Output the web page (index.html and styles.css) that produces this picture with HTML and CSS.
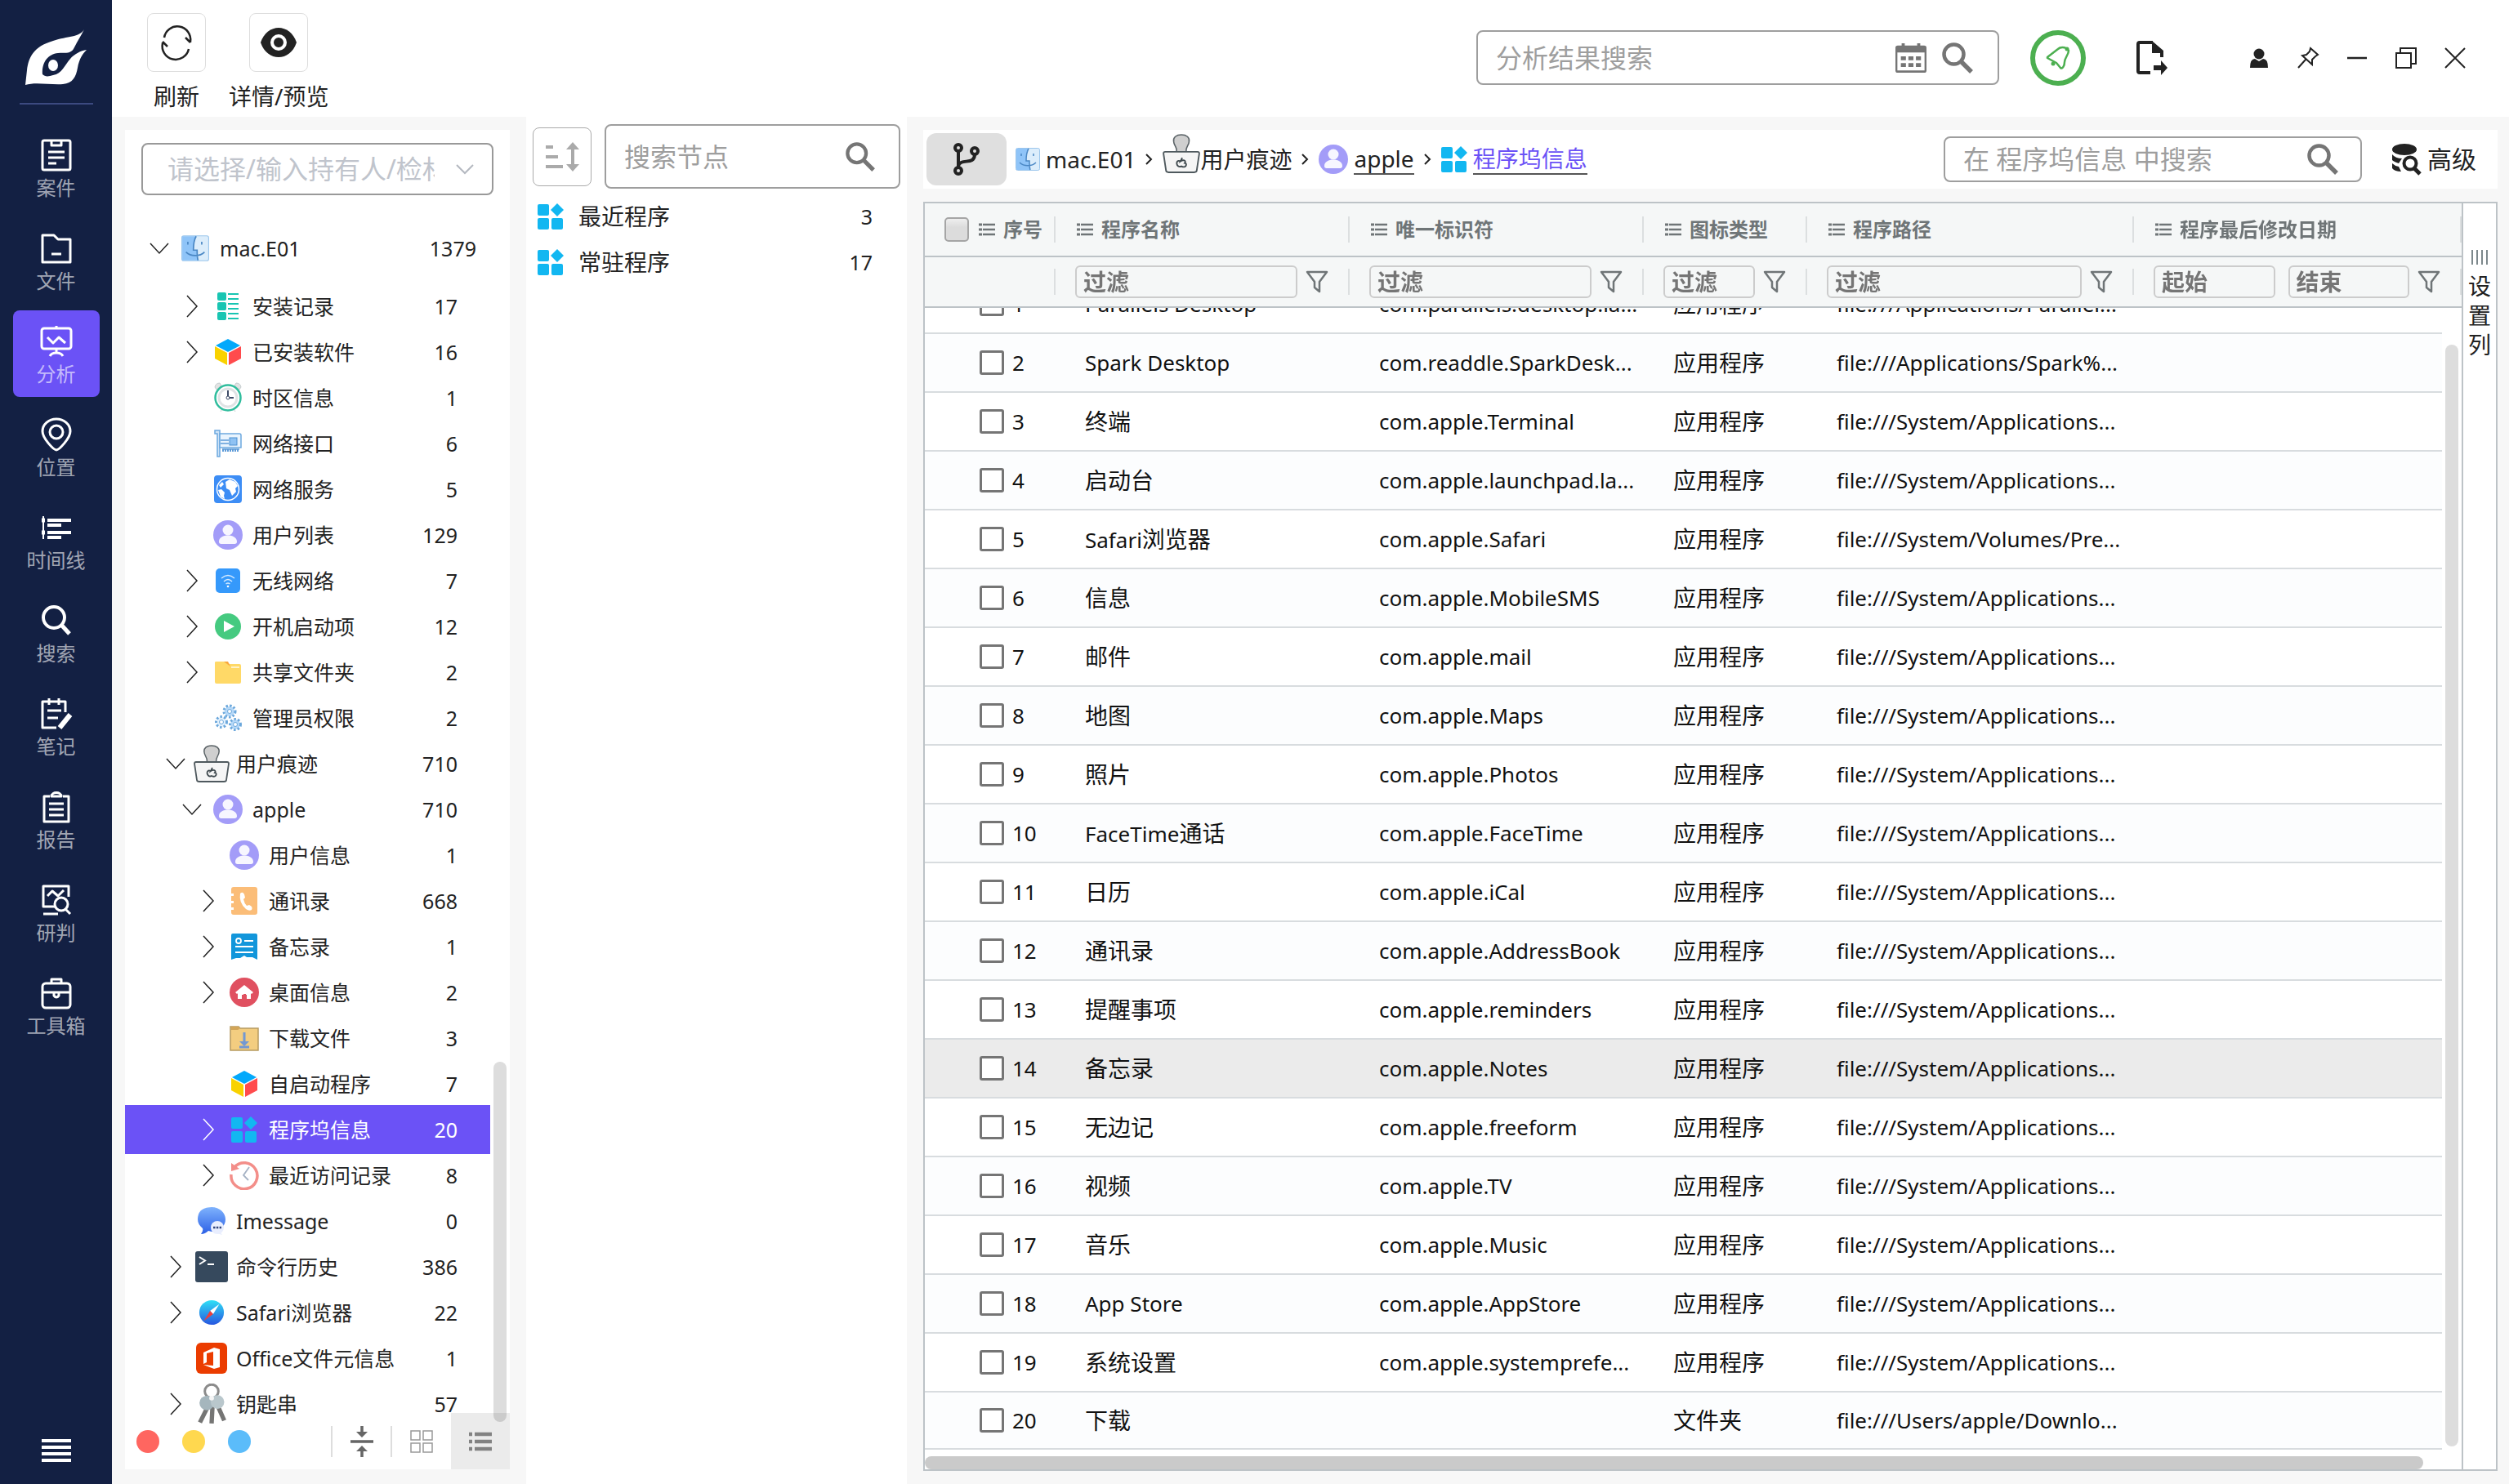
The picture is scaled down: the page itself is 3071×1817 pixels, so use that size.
FILE: index.html
```html
<!DOCTYPE html>
<html lang="zh-CN">
<head>
<meta charset="utf-8">
<title>程序坞信息</title>
<link rel="stylesheet" href="styles.css">
</head>
<body>
<svg class="sprite" aria-hidden="true">
  <symbol id="search" viewBox="0 0 38 38"><circle cx="14.500" cy="14.500" r="12" fill="none" stroke="currentColor" stroke-width="4.500"/><path d="M24 24 36 36" stroke="currentColor" stroke-width="5.500"/></symbol>
  <symbol id="right" viewBox="0 0 24 28"><path d="M6 1 18 14 6 27" fill="none" stroke="currentColor" stroke-width="1.500"/></symbol>
  <symbol id="down" viewBox="0 0 24 28"><path d="M1 8 12 20 23 8" fill="none" stroke="currentColor" stroke-width="1.500"/></symbol>
  <symbol id="crumb" viewBox="0 0 10 16"><path d="M2 2 8 8 2 14" fill="none" stroke="currentColor" stroke-width="2"/></symbol>
  <symbol id="list" viewBox="0 0 20 16"><path d="M5 2H20M5 8H20M5 14H20" stroke="currentColor" stroke-width="2.500"/><path d="M0 2H4M0 8H4M0 14H4" stroke="currentColor" stroke-width="3"/></symbol>
  <symbol id="funnel" viewBox="0 0 28 28"><path d="M2 2H26L17 14V26L11 21V14Z" fill="none" stroke="currentColor" stroke-width="2.500" stroke-linejoin="round"/></symbol>
  <symbol id="apps" viewBox="0 0 32 32"><g fill="#12b7f1"><rect x="0" y="1" width="14" height="14" rx="2"/><rect x="0" y="18" width="14" height="14" rx="2"/><rect x="17" y="18" width="14" height="14" rx="2"/><path d="M24 0 32 8 24 16 16 8Z"/></g></symbol>
  <symbol id="finder" viewBox="0 0 30 28"><rect x=".5" y=".5" width="29" height="27" rx="2" fill="#dcedfb" stroke="#9cc6ec"/><path d="M1 1H16C13 6 13 11 13 16H17C17 20 17 24 18 27H1Z" fill="#8fc4f8"/><path d="M16 1C13 6 13 11 13 16H17C17 20 17 24 18 27M7 7V10M22 7V10M5 18C10 23 20 23 25 18" fill="none" stroke="#4a87c4" stroke-width="1.500"/></symbol>
  <symbol id="user" viewBox="0 0 36 36"><circle cx="18" cy="18" r="18" fill="#a39cf8"/><circle cx="18" cy="12" r="6.500" fill="#f7f6ff"/><path d="M7 26C7 16 29 16 29 26 29 30 26 29 18 29S7 30 7 26Z" fill="#f7f6ff"/></symbol>
  <symbol id="laptop" viewBox="0 0 44 46"><path d="M16 21C18 17 13 13 13 9 12 4 16 1 22 1S32 4 31 9C31 13 26 17 28 21Z" fill="#cfcfcf" stroke="#5a6266" stroke-width="1.500"/><path d="M3 21H41Q43 21 43 23L40 43Q40 45 37 45H7Q4 45 4 43L1 23Q1 21 3 21Z" fill="#f5f5f5" stroke="#4f595e" stroke-width="1.800"/><path d="M21 32C14 29 16 41 22 38 28 41 29 34 26 34 28 31 24 30 21 32L23 28" fill="none" stroke="#3f494e" stroke-width="1.800"/></symbol>
  <symbol id="i-list" viewBox="0 0 34 34"><g fill="#18c5b2"><rect x="4" y="0" width="11" height="10" rx="2"/><rect x="4" y="12" width="11" height="10" rx="2"/><rect x="4" y="24" width="11" height="10" rx="2"/></g><path d="M17 2H30M17 8H30M17 14H30M17 20H30M17 26H30M17 32H30" stroke="#18c5b2" stroke-width="2"/></symbol>
  <symbol id="i-cube" viewBox="0 0 34 34"><path d="M17 1 32 9 17 17 2 9Z" fill="#03a9fb"/><path d="M1 10 16 18V33L1 25Z" fill="#f9d200"/><path d="M33 10 18 18V33L33 25Z" fill="#ff4b4d"/></symbol>
  <symbol id="i-clock" viewBox="0 0 34 38"><path d="M1 6Q2 1 7 1L9 4 3 9ZM33 6Q32 1 27 1L25 4 31 9ZM8 36 11 31M26 36 23 31" fill="#e3e3e3" stroke="#c5cdcf"/><circle cx="17" cy="19" r="15.500" fill="#fff" stroke="#30bd9d" stroke-width="2.500"/><circle cx="17" cy="19" r="11" fill="none" stroke="#e0e3e5" stroke-width="3"/><path d="M17 10V19H24" fill="none" stroke="#3c4a66" stroke-width="2"/><circle cx="17" cy="19" r="2" fill="#fff" stroke="#3c4a66"/></symbol>
  <symbol id="i-nic" viewBox="0 0 34 34"><path d="M1 1H7V33H4V5H1Z" fill="#cfe4f8" stroke="#6ea9df" stroke-width="1.500"/><path d="M7 5H31Q33 5 33 7V22H7Z" fill="#e9f4fe" stroke="#6ea9df" stroke-width="1.500"/><rect x="19" y="10" width="9" height="9" fill="#8fc2f3" stroke="#4d8fd0"/><path d="M8 13H18M8 17H18M10 24H31" stroke="#5d9bd8" stroke-width="1.500"/><path d="M10 25.500H31" stroke="#5d9bd8" stroke-width="3" stroke-dasharray="2 1"/></symbol>
  <symbol id="i-globe" viewBox="0 0 34 34"><rect width="34" height="34" rx="4" fill="#3d8df5"/><circle cx="17" cy="17" r="13.500" fill="#3d8df5" stroke="#fff" stroke-width="1.500"/><path d="M14 8 19 5 26 8 29 13 26 16 27 20 22 25 19 18 15 16ZM5 18 9 17 13 21 12 25 13 29 8 26ZM6 12 10 8 12 11 8 15Z" fill="#fff"/></symbol>
  <symbol id="i-wifi" viewBox="0 0 34 34"><rect x="2" y="2" width="30" height="30" rx="5" fill="#3599fb"/><path d="M9 14Q17 7 25 14M12 18Q17 13 22 18M14.500 21Q17 19 19.500 21" fill="none" stroke="#d4eaff" stroke-width="1.500"/><circle cx="17" cy="24" r="1.300" fill="#fff"/></symbol>
  <symbol id="i-play" viewBox="0 0 34 34"><circle cx="17" cy="17" r="16" fill="#45ca80"/><path d="M12 10 25 17 12 24Z" fill="#fff"/></symbol>
  <symbol id="i-folder" viewBox="0 0 34 34"><path d="M1 5Q1 4 3 4H15L19 7H31Q33 7 33 9V29Q33 31 31 31H3Q1 31 1 29Z" fill="#ffd967"/><path d="M12 4H17L20 10Z" fill="#f9a73e"/><path d="M21 11H31" stroke="#fff2c8" stroke-width="2"/></symbol>
  <symbol id="i-gears" viewBox="0 0 34 34"><g fill="#b5d8f8"><circle cx="19" cy="9" r="6"/><circle cx="9" cy="22" r="6" fill="#e3f1fd"/><circle cx="26" cy="25" r="6"/></g><g fill="none" stroke="#6ca8dc" stroke-width="3" stroke-dasharray="2.500 2.200"><circle cx="19" cy="9" r="7"/><circle cx="9" cy="22" r="6.500"/><circle cx="26" cy="25" r="6.500"/></g><g fill="#fff" stroke="#6ca8dc"><circle cx="19" cy="9" r="2.500"/><circle cx="9" cy="22" r="2.500"/><circle cx="26" cy="25" r="2.500"/></g></symbol>
  <symbol id="i-phone" viewBox="0 0 34 34"><path d="M4 0H30Q33 0 33 3V31Q33 34 30 34H4Q1 34 1 31V28H4V25H1V20H4V17H1V11H4V8H1V3Q1 0 4 0Z" fill="#fbbd78"/><path d="M12 8Q15 5 17 9L18 13 16 15Q17 20 20 23L23 22Q28 24 26 28 23 30 19 27 10 19 12 8Z" fill="#fff"/></symbol>
  <symbol id="i-memo" viewBox="0 0 34 34"><path d="M1 3Q1 1 3 1H31Q33 1 33 3V33L27 30H20L17 28 12 31H7L1 33Z" fill="#1296db"/><circle cx="10" cy="10" r="3" fill="none" stroke="#fff" stroke-width="1.800"/><path d="M17 10H28M6 17H28M6 24H28" stroke="#fff" stroke-width="2"/></symbol>
  <symbol id="i-home" viewBox="0 0 36 36"><circle cx="18" cy="18" r="18" fill="#e05060"/><path d="M7 18 18 9 29 18 27 20 18 13 9 20ZM10 19 18 13 26 19V26H21V21H15V26H10Z" fill="#fff"/><path d="M17 26V20H20V26Z" fill="#e05060"/></symbol>
  <symbol id="i-dl" viewBox="0 0 36 32"><path d="M1 2H11L13 4H35V31H1Z" fill="#f3cd80" stroke="#b79a60" stroke-width="1.500"/><path d="M2 2H11L12 5 10 6H2Z" fill="#d3a558"/><path d="M18 9V22M12 27H24" stroke="#7398d2" stroke-width="3"/><path d="M12 20 18 26 24 20Z" fill="#7398d2"/></symbol>
  <symbol id="i-recent" viewBox="0 0 36 36"><path d="M6 8A16 16 0 1 1 2 17" fill="none" stroke="#f38e89" stroke-width="3.500"/><path d="M2 3V13L12 10Z" fill="#f38e89"/><path d="M24 8 17 18 23 24" fill="none" stroke="#a5b2c4" stroke-width="1.800"/></symbol>
  <symbol id="i-msg" viewBox="0 0 36 36"><linearGradient id="gm" x2="0" y2="1"><stop stop-color="#7fb3fd"/><stop offset="1" stop-color="#2c60e6"/></linearGradient><path d="M18 1C28 1 35 8 35 16S28 31 18 31L14 30Q10 34 5 34 8 30 7 27 1 22 1 16 1 1 18 1Z" fill="url(#gm)"/><circle cx="25" cy="26" r="8" fill="#e9eefe"/><path d="M29 32 31 35 24 33Z" fill="#e9eefe"/><path d="M20 26H30" stroke="#32457c" stroke-width="2.500" stroke-dasharray="2.500 1.300"/></symbol>
  <symbol id="i-term" viewBox="0 0 40 38"><rect width="40" height="38" rx="3" fill="#36495d"/><path d="M5 7 12 11.500 5 16M15 16H23" fill="none" stroke="#fff" stroke-width="2"/></symbol>
  <symbol id="i-safari" viewBox="0 0 34 34"><linearGradient id="gs" x2="0" y2="1"><stop stop-color="#2fe0f6"/><stop offset="1" stop-color="#2756e0"/></linearGradient><circle cx="17" cy="17" r="16" fill="url(#gs)"/><path d="M27 6 19 19 15 15Z" fill="#fff"/><path d="M7 28 19 19 15 15Z" fill="#ee3f3a"/></symbol>
  <symbol id="i-office" viewBox="0 0 38 38"><rect width="38" height="38" rx="6" fill="#eb3c00"/><path d="M9 12 22 6 29 8V30L22 32 9 27 21 28V11L13 13V24L9 26Z" fill="#fff"/></symbol>
  <symbol id="i-keys" viewBox="0 0 34 42"><circle cx="17" cy="8" r="7" fill="none" stroke="#8b8b8b" stroke-width="2.500"/><path d="M14 22 5 40M18 22 17 41M22 20 30 38" stroke="#757574" stroke-width="4.500"/><circle cx="12" cy="20" r="7.500" fill="#a5b6bd"/><circle cx="23" cy="19" r="7" fill="#b9c7cc"/><circle cx="17" cy="15" r="2.500" fill="#f5f5f5"/></symbol>
</svg>

<div class="app">
  <nav class="rail">
    <svg class="logo" viewBox="0 0 75 68"><path d="M72 0C66 10 52 8 34 14 10 21 4 34 2 50L0 68C12 64 30 68 46 67 58 66 62 58 64 47 66 36 70 30 75 25 68 26 60 30 55 36 48 44 45 54 34 56 28 58 24 58 21 55 20 40 28 30 40 29 48 28 56 31 60 22 64 14 68 8 72 0Z" fill="#fff"/><ellipse cx="34" cy="44" rx="6" ry="7" fill="#fff"/></svg>
    <div class="rail-line"></div>
    <div class="rail-items">
      <button class="rail-btn"><svg viewBox="0 0 40 40"><rect x="3" y="2" width="34" height="36" rx="2"/><path d="M14 2V8H26V2M10 16H30M10 23H30M10 30H20"/></svg>案件</button>
      <button class="rail-btn"><svg viewBox="0 0 40 40"><path d="M3 4H17L22 9H37V37H3ZM14 27H26"/></svg>文件</button>
      <button class="rail-btn active"><svg viewBox="0 0 40 40"><rect x="2" y="4" width="36" height="25" rx="3"/><path d="M20 1V4M20 29V34M12 38Q14 34 20 34T28 38M9 15 16 22 23 15 31 22"/></svg>分析</button>
      <button class="rail-btn"><svg viewBox="0 0 40 40"><path d="M20 39C17 39 3 25 3 16A17 15 0 0 1 37 16C37 25 23 39 20 39Z"/><circle cx="20" cy="17" r="8"/></svg>位置</button>
      <button class="rail-btn"><svg viewBox="0 0 40 40"><path d="M4 6V34" stroke-width="2"/><path d="M9 11H38M9 17H26M9 26H38M9 32H26" stroke-width="4"/><path d="M2 11H6M2 26H6" stroke-width="5"/></svg>时间线</button>
      <button class="rail-btn"><svg viewBox="0 0 40 40"><circle cx="17" cy="16" r="13" stroke-width="4"/><path d="M26 25 36 36" stroke-width="5"/></svg>搜索</button>
      <button class="rail-btn"><svg viewBox="0 0 40 40"><path d="M31 18V5H3V37H20M11 1V9M23 1V9M9 16H26M9 25H22" stroke-width="3"/><path d="M24 37 37 21" stroke-width="6"/></svg>笔记</button>
      <button class="rail-btn"><svg viewBox="0 0 40 40"><path d="M12 7H5V38H35V7H28M11 16H29M11 23H29M11 30H29M14 7C14 1 26 1 26 7Z"/></svg>报告</button>
      <button class="rail-btn"><svg viewBox="0 0 40 40"><path d="M18 28H4V3H35V16M4 37H22M9 15 15 9 22 15 29 8"/><circle cx="26" cy="25" r="8"/><path d="M31 31 37 37"/></svg>研判</button>
      <button class="rail-btn"><svg viewBox="0 0 40 40"><rect x="3" y="8" width="34" height="30" rx="4"/><path d="M14 8V3H26V8M3 19H37M17 19V23Q20 27 23 23V19"/></svg>工具箱</button>
    </div>
    <button class="rail-menu" aria-label="菜单"><svg viewBox="0 0 36 30"><path d="M0 3H36M0 11H36M0 19H36M0 27H36" stroke="#fff" stroke-width="4"/></svg></button>
  </nav>

  <div class="shell">
    <header class="top">
      <div class="tools">
        <button class="tool"><span class="tool-box"><svg viewBox="0 0 36 36"><path d="M3 12A15.500 15.500 0 0 1 35 17V18M1 18V19A15.500 15.500 0 0 0 33 26M29 12 35 18M1 17 7 23" fill="none" stroke="#222" stroke-width="2.500"/></svg></span>刷新</button>
        <button class="tool"><span class="tool-box"><svg viewBox="0 0 44 36"><path d="M0 18C8 -6 36 -6 44 18 36 42 8 42 0 18Z" fill="#222"/><circle cx="22" cy="18" r="8" fill="#222" stroke="#fff" stroke-width="4"/></svg></span>详情/预览</button>
      </div>
      <div class="top-right">
        <label class="box top-search"><input type="text" placeholder="分析结果搜索" aria-label="分析结果搜索"><svg class="s38" viewBox="0 0 40 38"><path d="M3 3H37Q40 3 40 6V35Q40 38 37 38H3Q0 38 0 35V6Q0 3 3 3Z" fill="#757575"/><path d="M8 0H12V5H8ZM28 0H32V5H28Z" fill="#757575"/><path d="M2.500 12H37.500V35H2.500Z" fill="#fff"/><path d="M7 19.500H33M7 28H33" stroke="#757575" stroke-width="5" stroke-dasharray="6.500 3.200"/></svg><svg class="s38"><use href="#search"/></svg></label>
        <button class="ring" aria-label="通知"><svg viewBox="0 0 28 28"><path d="M1 13 14 3C17 0 22 1 24 2L27 5C27 10 22 14 22 19 22 24 19 28 17 26L12 20 1 14Z" fill="none" stroke="#4caf50" stroke-width="2.500" stroke-linejoin="round"/><circle cx="8" cy="21" r="2.500" fill="#4caf50"/><circle cx="25" cy="3" r="2.500" fill="#4caf50"/></svg></button>
        <button class="export" aria-label="导出"><svg viewBox="0 0 38 42"><path d="M20 2H4Q2 2 2 4V37Q2 39 4 39H17" fill="none" stroke="#222" stroke-width="4"/><path d="M19 0 33 12V20H29V15H19Z" fill="#222"/><path d="M21 30H30V24L38 33 30 42V36H21Z" fill="#222"/></svg></button>
        <div class="win">
          <button aria-label="用户"><svg viewBox="0 0 26 26"><circle cx="13" cy="8" r="6.500" fill="#222"/><path d="M2 25Q2 14 8 14L13 17 18 14Q24 14 24 25Z" fill="#222"/></svg></button>
          <button aria-label="置顶"><svg viewBox="0 0 26 26"><path d="M16 1 25 9 22 11 18 15V21L6 10 11 9 15 5ZM10 15 1 25" fill="none" stroke="#222" stroke-width="2"/></svg></button>
          <button aria-label="最小化"><svg viewBox="0 0 26 26"><path d="M1 13H25" stroke="#222" stroke-width="2.500"/></svg></button>
          <button aria-label="还原"><svg viewBox="0 0 26 26"><path d="M1 7H19V25H1ZM6 6V1H25V20H20" fill="none" stroke="#222" stroke-width="2"/></svg></button>
          <button aria-label="关闭"><svg viewBox="0 0 26 26"><path d="M1 1 25 25M25 1 1 25" stroke="#222" stroke-width="2"/></svg></button>
        </div>
      </div>
    </header>

    <div class="content">
      <aside class="side">
        <div class="select-wrap"><select class="picker" aria-label="持有人/检材"><option>请选择/输入持有人/检材</option></select><svg class="picker-arrow" viewBox="0 0 22 12"><path d="M1 1 11 11 21 1" fill="none" stroke="#b4b8c0" stroke-width="2"/></svg></div>
        <ul class="tree">
          <li class="node root"><svg class="tog"><use href="#down"/></svg><svg class="ic"><use href="#finder"/></svg><span>mac.E01</span><b>1379</b></li>
          <li class="node lv2"><svg class="tog"><use href="#right"/></svg><svg class="ic"><use href="#i-list"/></svg><span>安装记录</span><b>17</b></li>
          <li class="node lv2"><svg class="tog"><use href="#right"/></svg><svg class="ic"><use href="#i-cube"/></svg><span>已安装软件</span><b>16</b></li>
          <li class="node lv2"><i class="tog"></i><svg class="ic big"><use href="#i-clock"/></svg><span>时区信息</span><b>1</b></li>
          <li class="node lv2"><i class="tog"></i><svg class="ic"><use href="#i-nic"/></svg><span>网络接口</span><b>6</b></li>
          <li class="node lv2"><i class="tog"></i><svg class="ic"><use href="#i-globe"/></svg><span>网络服务</span><b>5</b></li>
          <li class="node lv2"><i class="tog"></i><svg class="ic mid"><use href="#user"/></svg><span>用户列表</span><b>129</b></li>
          <li class="node lv2"><svg class="tog"><use href="#right"/></svg><svg class="ic"><use href="#i-wifi"/></svg><span>无线网络</span><b>7</b></li>
          <li class="node lv2"><svg class="tog"><use href="#right"/></svg><svg class="ic"><use href="#i-play"/></svg><span>开机启动项</span><b>12</b></li>
          <li class="node lv2"><svg class="tog"><use href="#right"/></svg><svg class="ic"><use href="#i-folder"/></svg><span>共享文件夹</span><b>2</b></li>
          <li class="node lv2"><i class="tog"></i><svg class="ic"><use href="#i-gears"/></svg><span>管理员权限</span><b>2</b></li>
          <li class="node lv1"><svg class="tog"><use href="#down"/></svg><svg class="ic huge"><use href="#laptop"/></svg><span>用户痕迹</span><b>710</b></li>
          <li class="node lv2"><svg class="tog"><use href="#down"/></svg><svg class="ic mid"><use href="#user"/></svg><span>apple</span><b>710</b></li>
          <li class="node lv3"><i class="tog"></i><svg class="ic mid"><use href="#user"/></svg><span>用户信息</span><b>1</b></li>
          <li class="node lv3"><svg class="tog"><use href="#right"/></svg><svg class="ic"><use href="#i-phone"/></svg><span>通讯录</span><b>668</b></li>
          <li class="node lv3"><svg class="tog"><use href="#right"/></svg><svg class="ic"><use href="#i-memo"/></svg><span>备忘录</span><b>1</b></li>
          <li class="node lv3"><svg class="tog"><use href="#right"/></svg><svg class="ic mid"><use href="#i-home"/></svg><span>桌面信息</span><b>2</b></li>
          <li class="node lv3"><i class="tog"></i><svg class="ic mid"><use href="#i-dl"/></svg><span>下载文件</span><b>3</b></li>
          <li class="node lv3"><i class="tog"></i><svg class="ic"><use href="#i-cube"/></svg><span>自启动程序</span><b>7</b></li>
          <li class="node lv3 selected"><svg class="tog"><use href="#right"/></svg><svg class="ic small"><use href="#apps"/></svg><span>程序坞信息</span><b>20</b></li>
          <li class="node lv3"><svg class="tog"><use href="#right"/></svg><svg class="ic mid"><use href="#i-recent"/></svg><span>最近访问记录</span><b>8</b></li>
          <li class="node lv1"><i class="tog"></i><svg class="ic mid"><use href="#i-msg"/></svg><span>Imessage</span><b>0</b></li>
          <li class="node lv1"><svg class="tog"><use href="#right"/></svg><svg class="ic big"><use href="#i-term"/></svg><span>命令行历史</span><b>386</b></li>
          <li class="node lv1"><svg class="tog"><use href="#right"/></svg><svg class="ic small"><use href="#i-safari"/></svg><span>Safari浏览器</span><b>22</b></li>
          <li class="node lv1"><i class="tog"></i><svg class="ic big"><use href="#i-office"/></svg><span>Office文件元信息</span><b>1</b></li>
          <li class="node lv1"><svg class="tog"><use href="#right"/></svg><svg class="ic huge"><use href="#i-keys"/></svg><span>钥匙串</span><b>57</b></li>
        </ul>
        <div class="side-thumb"></div>
        <div class="side-foot">
          <i class="dot red"></i><i class="dot yellow"></i><i class="dot blue"></i>
          <div class="foot-tools">
            <button class="foot-btn ruled" aria-label="折叠"><svg viewBox="0 0 28 38"><path d="M0 19H28M14 0V8M14 30V38" stroke="#666" stroke-width="3.500"/><path d="M7 7H21L14 14ZM7 31H21L14 24Z" fill="#666"/></svg></button>
            <button class="foot-btn" aria-label="网格"><svg viewBox="0 0 28 28"><path d="M1 1H12V12H1ZM16 1H27V12H16ZM1 16H12V27H1ZM16 16H27V27H16Z" fill="none" stroke="#999" stroke-width="1.500"/></svg></button>
            <button class="foot-btn on" aria-label="列表"><svg viewBox="0 0 28 24"><path d="M0 3H4M7 3H28M0 12H4M7 12H28M0 21H4M7 21H28" stroke="#828282" stroke-width="4.500"/></svg></button>
          </div>
        </div>
      </aside>

      <section class="nodes">
        <div class="nodes-head">
          <button class="sort" aria-label="排序"><svg viewBox="0 0 40 36"><path d="M0 6H9M0 18H15M0 30H21" stroke="#aaa" stroke-width="4"/><path d="M33 6V30" stroke="#aaa" stroke-width="4"/><path d="M25 9 33 0 41 9ZM25 27 33 36 41 27Z" fill="#aaa"/></svg></button>
          <label class="box node-search"><input type="text" placeholder="搜索节点" aria-label="搜索节点"><svg class="s36"><use href="#search"/></svg></label>
        </div>
        <ul class="node-list">
          <li><svg><use href="#apps"/></svg><span>最近程序</span><b>3</b></li>
          <li><svg><use href="#apps"/></svg><span>常驻程序</span><b>17</b></li>
        </ul>
      </section>

      <main class="main">
        <div class="bar">
          <button class="branch" aria-label="路径"><svg viewBox="0 0 34 40"><g fill="none" stroke="#222" stroke-width="4"><circle cx="7" cy="6" r="4"/><circle cx="7" cy="34" r="4"/><circle cx="27" cy="10" r="4"/><path d="M7 10V30M27 14C27 28 10 18 7 28"/></g></svg></button>
          <nav class="crumbs">
            <a href="#mac"><svg class="c30"><use href="#finder"/></svg><span>mac.E01</span></a><svg class="sep"><use href="#crumb"/></svg>
            <a href="#trace" class="tight"><svg class="c46"><use href="#laptop"/></svg><span>用户痕迹</span></a><svg class="sep"><use href="#crumb"/></svg>
            <a href="#apple" class="lined"><svg class="c36"><use href="#user"/></svg><span>apple</span></a><svg class="sep"><use href="#crumb"/></svg>
            <a href="#dock" class="lined here"><svg class="c32"><use href="#apps"/></svg><span>程序坞信息</span></a>
          </nav>
          <label class="box bar-search"><input type="text" placeholder="在 程序坞信息 中搜索" aria-label="在 程序坞信息 中搜索"><svg class="s38"><use href="#search"/></svg></label>
          <button class="adv"><svg viewBox="0 0 36 38"><ellipse cx="16" cy="7" rx="15" ry="7" fill="#222"/><path d="M1 13Q5 18 13 18L9 24Q3 22 1 20ZM1 24Q4 27 9 28L12 34Q4 34 1 30Z" fill="#222"/><circle cx="23" cy="24" r="7.500" fill="#fff" stroke="#222" stroke-width="4"/><path d="M28 30 35 37" stroke="#222" stroke-width="5"/></svg>高级</button>
        </div>

        <div class="grid">
          <div class="grid-main">
            <div class="scroller">
              <table>
                <colgroup><col class="w0"><col class="w1"><col class="w1"><col class="w3"><col class="w4"><col></colgroup>
                <thead>
                  <tr class="titles">
                    <th><div class="th first"><input type="checkbox" class="all" aria-label="全选"><svg><use href="#list"/></svg>序号</div></th>
                    <th><div class="th"><svg><use href="#list"/></svg>程序名称</div></th>
                    <th><div class="th"><svg><use href="#list"/></svg>唯一标识符</div></th>
                    <th><div class="th"><svg><use href="#list"/></svg>图标类型</div></th>
                    <th><div class="th"><svg><use href="#list"/></svg>程序路径</div></th>
                    <th><div class="th"><svg><use href="#list"/></svg>程序最后修改日期</div></th>
                  </tr>
                  <tr class="filters">
                    <th><div class="th"></div></th>
                    <th><div class="th"><input type="text" placeholder="过滤" aria-label="过滤程序名称"><svg><use href="#funnel"/></svg></div></th>
                    <th><div class="th"><input type="text" placeholder="过滤" aria-label="过滤唯一标识符"><svg><use href="#funnel"/></svg></div></th>
                    <th><div class="th"><input type="text" placeholder="过滤" aria-label="过滤图标类型"><svg><use href="#funnel"/></svg></div></th>
                    <th><div class="th"><input type="text" placeholder="过滤" aria-label="过滤程序路径"><svg><use href="#funnel"/></svg></div></th>
                    <th><div class="th range"><input type="text" placeholder="起始" aria-label="起始"><input type="text" placeholder="结束" aria-label="结束"><svg><use href="#funnel"/></svg></div></th>
                  </tr>
                </thead>
                <tbody>
                  <tr><td><label><input type="checkbox">1</label></td><td>Parallels Desktop</td><td>com.parallels.desktop.la...</td><td class="zh">应用程序</td><td>file:///Applications/Parallel...</td><td></td></tr>
                  <tr><td><label><input type="checkbox">2</label></td><td>Spark Desktop</td><td>com.readdle.SparkDesk...</td><td class="zh">应用程序</td><td>file:///Applications/Spark%...</td><td></td></tr>
                  <tr><td><label><input type="checkbox">3</label></td><td class="zh">终端</td><td>com.apple.Terminal</td><td class="zh">应用程序</td><td>file:///System/Applications...</td><td></td></tr>
                  <tr><td><label><input type="checkbox">4</label></td><td class="zh">启动台</td><td>com.apple.launchpad.la...</td><td class="zh">应用程序</td><td>file:///System/Applications...</td><td></td></tr>
                  <tr><td><label><input type="checkbox">5</label></td><td>Safari<span class="zh">浏览器</span></td><td>com.apple.Safari</td><td class="zh">应用程序</td><td>file:///System/Volumes/Pre...</td><td></td></tr>
                  <tr><td><label><input type="checkbox">6</label></td><td class="zh">信息</td><td>com.apple.MobileSMS</td><td class="zh">应用程序</td><td>file:///System/Applications...</td><td></td></tr>
                  <tr><td><label><input type="checkbox">7</label></td><td class="zh">邮件</td><td>com.apple.mail</td><td class="zh">应用程序</td><td>file:///System/Applications...</td><td></td></tr>
                  <tr><td><label><input type="checkbox">8</label></td><td class="zh">地图</td><td>com.apple.Maps</td><td class="zh">应用程序</td><td>file:///System/Applications...</td><td></td></tr>
                  <tr><td><label><input type="checkbox">9</label></td><td class="zh">照片</td><td>com.apple.Photos</td><td class="zh">应用程序</td><td>file:///System/Applications...</td><td></td></tr>
                  <tr><td><label><input type="checkbox">10</label></td><td>FaceTime<span class="zh">通话</span></td><td>com.apple.FaceTime</td><td class="zh">应用程序</td><td>file:///System/Applications...</td><td></td></tr>
                  <tr><td><label><input type="checkbox">11</label></td><td class="zh">日历</td><td>com.apple.iCal</td><td class="zh">应用程序</td><td>file:///System/Applications...</td><td></td></tr>
                  <tr><td><label><input type="checkbox">12</label></td><td class="zh">通讯录</td><td>com.apple.AddressBook</td><td class="zh">应用程序</td><td>file:///System/Applications...</td><td></td></tr>
                  <tr><td><label><input type="checkbox">13</label></td><td class="zh">提醒事项</td><td>com.apple.reminders</td><td class="zh">应用程序</td><td>file:///System/Applications...</td><td></td></tr>
                  <tr class="hover"><td><label><input type="checkbox">14</label></td><td class="zh">备忘录</td><td>com.apple.Notes</td><td class="zh">应用程序</td><td>file:///System/Applications...</td><td></td></tr>
                  <tr><td><label><input type="checkbox">15</label></td><td class="zh">无边记</td><td>com.apple.freeform</td><td class="zh">应用程序</td><td>file:///System/Applications...</td><td></td></tr>
                  <tr><td><label><input type="checkbox">16</label></td><td class="zh">视频</td><td>com.apple.TV</td><td class="zh">应用程序</td><td>file:///System/Applications...</td><td></td></tr>
                  <tr><td><label><input type="checkbox">17</label></td><td class="zh">音乐</td><td>com.apple.Music</td><td class="zh">应用程序</td><td>file:///System/Applications...</td><td></td></tr>
                  <tr><td><label><input type="checkbox">18</label></td><td>App Store</td><td>com.apple.AppStore</td><td class="zh">应用程序</td><td>file:///System/Applications...</td><td></td></tr>
                  <tr><td><label><input type="checkbox">19</label></td><td class="zh">系统设置</td><td>com.apple.systemprefe...</td><td class="zh">应用程序</td><td>file:///System/Applications...</td><td></td></tr>
                  <tr class="last"><td><label><input type="checkbox">20</label></td><td class="zh">下载</td><td></td><td class="zh">文件夹</td><td>file:///Users/apple/Downlo...</td><td></td></tr>
                </tbody>
              </table>
            </div>
            <div class="vtrack"><div class="vthumb"></div></div>
            <div class="hthumb"></div>
          </div>
          <button class="cols"><svg viewBox="0 0 20 18"><path d="M1 0V18M7 0V18M13 0V18M19 0V18" stroke="#7d888c" stroke-width="2"/></svg><span>设置列</span></button>
        </div>
      </main>
    </div>
  </div>
</div>
</body>
</html>
```
FILE: styles.css
```css
* { box-sizing: border-box; }
body {
  margin: 0;
  font-family: "Noto Sans", "Noto Sans CJK SC", sans-serif;
  font-size: 28px;
  line-height: 36px;
  color: #222;
  background: #f7f7f7;
}
button, input, select { font: inherit; color: inherit; }
button { border: 0; padding: 0; background: none; display: flex; align-items: center; justify-content: center; cursor: pointer; }
ul { list-style: none; margin: 0; padding: 0; }
b { font-weight: 400; }
a { color: inherit; text-decoration: none; }
svg { display: block; flex: none; overflow: visible; }
.sprite { position: absolute; width: 0; height: 0; }

.app { display: flex; height: 100vh; }
.shell { flex: 1; min-width: 0; display: flex; flex-direction: column; }
.content { flex: 1; min-height: 0; display: flex; }

/* navigation rail */
.rail { flex: none; width: 137px; background: #132043; display: flex; flex-direction: column; align-items: center; padding: 36px 0 26px; }
.logo { width: 75px; height: 68px; }
.rail-line { width: 90px; height: 2px; background: #3c4a80; margin: 22px 0 24px; }
.rail-items { display: flex; flex-direction: column; gap: 8px; }
.rail-btn { width: 106px; height: 106px; border-radius: 8px; flex-direction: column; gap: 4px; padding-top: 6px; font-size: 24px; line-height: 32px; color: rgba(255, 255, 255, .62); }
.rail-btn.active { background: #6b52f6; }
.rail-btn svg { width: 40px; height: 40px; fill: none; stroke: #fff; stroke-width: 3; stroke-linejoin: round; }
.rail-menu { margin-top: auto; }
.rail-menu svg { width: 36px; height: 30px; }

/* top bar */
.top { height: 143px; background: #fff; display: flex; justify-content: space-between; align-items: center; padding: 0 53px 0 43px; }
.tools { display: flex; gap: 28px; padding-top: 8px; }
.tool { flex-direction: column; gap: 12px; min-width: 72px; }
.tool-box { width: 72px; height: 72px; border: 1px solid #ddd; border-radius: 8px; display: flex; align-items: center; justify-content: center; }
.tool-box svg { height: 36px; width: 44px; }
.top-right { display: flex; align-items: center; padding-bottom: 2px; }
.box { display: flex; align-items: center; border: 2px solid #9e9e9e; border-radius: 8px; background: #fff; color: #757575; }
.box input { flex: 1; min-width: 0; border: 0; outline: 0; padding: 0; background: none; font-size: 32px; line-height: 40px; }
.box input::placeholder { color: #9e9e9e; opacity: 1; }
.s38 { width: 38px; height: 38px; }
.s36 { width: 36px; height: 36px; }
.top-search { width: 640px; height: 67px; padding: 0 30px 0 22px; gap: 19px; }
.ring { width: 68px; height: 68px; border: 6px solid #4caf50; border-radius: 50%; margin-left: 38px; }
.ring svg { width: 28px; height: 28px; }
.export { margin: 0 99px 0 62px; }
.export svg { width: 38px; height: 42px; }
.win { display: flex; gap: 34px; }
.win svg { width: 26px; height: 26px; }

/* evidence tree */
.side { position: relative; flex: none; width: 471px; margin: 16px 20px 18px 16px; background: #fff; display: flex; flex-direction: column; }
.select-wrap { position: relative; margin: 16px 20px 22px; }
.picker { display: block; appearance: none; width: 100%; height: 64px; border: 2px solid #999; border-radius: 8px; background: #fff; color: #c0c4cc; font-size: 32px; line-height: 40px; padding: 0 70px 0 30px; }
.picker-arrow { position: absolute; right: 24px; top: 26px; width: 22px; height: 12px; pointer-events: none; }
.tree { flex: 1; min-height: 0; margin-right: 24px; font-size: 25px; line-height: 36px; }
.node { display: flex; align-items: center; height: 56px; padding: 0 40px 0 30px; white-space: nowrap; }
.node b { margin-left: auto; }
.node.root { height: 86px; padding-right: 17px; }
.node.lv1 { padding-left: 50px; }
.node.lv2 { padding-left: 70px; }
.node.lv3 { padding-left: 90px; }
.node.selected { height: 60px; margin: -2px 0; background: #6b52f6; color: #fff; }
.tog { width: 24px; height: 28px; margin-right: 15px; }
.ic { width: 34px; height: 34px; margin-right: 13px; }
.ic.small { width: 32px; height: 32px; margin: 0 14px 0 1px; }
.ic.mid { width: 36px; height: 36px; margin: 0 12px 0 -1px; }
.ic.big { width: 40px; height: 38px; margin: 0 10px 0 -3px; }
.ic.huge { width: 44px; height: 50px; margin: 0 8px 0 -5px; }
.side-thumb { position: absolute; right: 4px; top: 1141px; bottom: 58px; width: 16px; border-radius: 8px; background: #ddd; }
.side-foot { position: relative; display: flex; align-items: center; gap: 28px; height: 69px; padding-left: 14px; }
.dot { width: 28px; height: 28px; border-radius: 50%; }
.red { background: #ff6660; }
.yellow { background: #ffd84f; }
.blue { background: #5bbcfa; }
.foot-tools { display: flex; align-items: center; margin-left: auto; height: 100%; }
.foot-btn { width: 72px; height: 38px; }
.foot-btn.ruled { border: solid #ddd; border-width: 0 2px; width: 75px; }
.foot-btn.on { height: 100%; background: rgba(0, 0, 0, .08); }
.foot-btn svg { width: 28px; height: 28px; }
.foot-btn.ruled svg { height: 38px; }

/* child node list */
.nodes { flex: none; width: 466px; background: #fff; padding: 9px 8px; }
.nodes-head { display: flex; align-items: center; gap: 16px; margin-bottom: 6px; }
.sort { flex: none; width: 72px; height: 72px; border: 1px solid #aaa; border-radius: 8px; }
.sort svg { width: 40px; height: 36px; }
.node-search { flex: 1; min-width: 0; height: 79px; padding: 0 29px 0 22px; }
.node-list li { display: flex; align-items: center; height: 56px; padding: 0 34px 0 6px; }
.node-list svg { width: 32px; height: 32px; margin-right: 18px; }
.node-list b { margin-left: auto; font-size: 25px; }

/* main area */
.main { flex: 1; min-width: 0; margin: 16px 14px 16px 20px; display: flex; flex-direction: column; gap: 16px; }
.bar { flex: none; display: flex; align-items: center; height: 72px; background: #fff; padding: 0 26px 0 4px; }
.branch { width: 98px; height: 64px; border-radius: 12px; background: #dfdfdf; margin-right: 11px; }
.branch svg { width: 34px; height: 40px; }
.crumbs { display: flex; align-items: center; flex: 1; white-space: nowrap; }
.crumbs a { display: flex; align-items: center; gap: 7px; }
.crumbs .tight { gap: 0; }
.crumbs .tight svg { margin-bottom: 14px; }
.crumbs .lined span { border-bottom: 2px solid #555; }
.crumbs .here span { color: #6b52f6; }
.sep { width: 10px; height: 16px; margin: 0 12px 0 11px; }
.c30 { width: 30px; height: 28px; }
.c32 { width: 32px; height: 32px; }
.c36 { width: 36px; height: 36px; }
.c46 { width: 46px; height: 48px; }
.bar-search { width: 512px; height: 56px; padding: 0 27px 0 22px; margin-right: 36px; }
.adv { gap: 8px; font-size: 30px; }
.adv svg { width: 36px; height: 38px; }

/* data grid */
.grid { flex: 1; min-height: 0; display: flex; border: 2px solid #bdc3c7; background: #fff; }
.grid-main { position: relative; flex: 1; min-width: 0; padding-bottom: 24px; }
.scroller { height: 100%; display: flex; flex-direction: column-reverse; overflow: auto; scrollbar-width: none; }
table { flex: none; width: 100%; table-layout: fixed; border-collapse: separate; border-spacing: 0; font-size: 26px; line-height: 36px; color: #111; }
.w0 { width: 160px; }
.w1 { width: 360px; }
.w3 { width: 200px; }
.w4 { width: 400px; }
thead { position: sticky; top: 0; z-index: 1; }
th { padding: 0; background: #f5f7f7; border-bottom: 2px solid #bdc3c7; color: #6f7577; font-size: 24px; font-weight: 700; text-align: left; }
.titles th { height: 66px; }
.filters th { height: 62px; }
.th { display: flex; align-items: center; height: 32px; padding: 0 24px 0 26px; border-right: 2px solid #dcdfe0; white-space: nowrap; }
.titles svg { width: 20px; height: 16px; margin-right: 10px; }
.filters .th { gap: 10px; padding-left: 24px; }
.filters input { flex: 1; min-width: 0; width: 0; height: 40px; border: 2px solid #ccc; border-radius: 6px; background: none; padding: 0 8px; font-size: 28px; font-weight: 700; }
.filters input::placeholder { color: #757575; opacity: 1; font-weight: 700; }
.filters .range input + input { margin-left: 6px; }
.filters svg { width: 28px; height: 28px; }
.th.first { padding: 0 0 0 24px; }
input[type="checkbox"] { appearance: none; flex: none; width: 30px; height: 30px; margin: 0 10px 0 0; border: 3px solid #757575; border-radius: 3px; background: #fff; }
.th .all { border: 2px solid #a5a5a5; border-radius: 5px; background: linear-gradient(#eee, #dcdcdc 40%); margin-right: 12px; }
td { height: 72px; padding: 0 0 0 36px; border-bottom: 2px solid #d8dcdf; white-space: nowrap; background: #fff; }
td:first-child { padding-left: 67px; }
td label { display: flex; align-items: center; }
tr:nth-child(even) td { background: #fcfdfe; }
tr.hover td { background: #ebebeb; }
tr.last td { height: 70px; }
.zh { font-size: 28px; }
.vtrack { position: absolute; top: 128px; right: 0; bottom: 24px; width: 24px; padding: 45px 4px 4px; background: #fff; }
.vthumb { height: 100%; border-radius: 8px; background: #ddd; }
.hthumb { position: absolute; left: 0; right: 47px; bottom: 0; height: 16px; border-radius: 8px; background: #cacaca; }
.cols { flex: none; width: 42px; border-left: 2px solid #bdc3c7; flex-direction: column; justify-content: flex-start; gap: 8px; padding-top: 57px; }
.cols svg { width: 20px; height: 18px; }
.cols span { width: 28px; white-space: normal; word-break: break-all; }
```
